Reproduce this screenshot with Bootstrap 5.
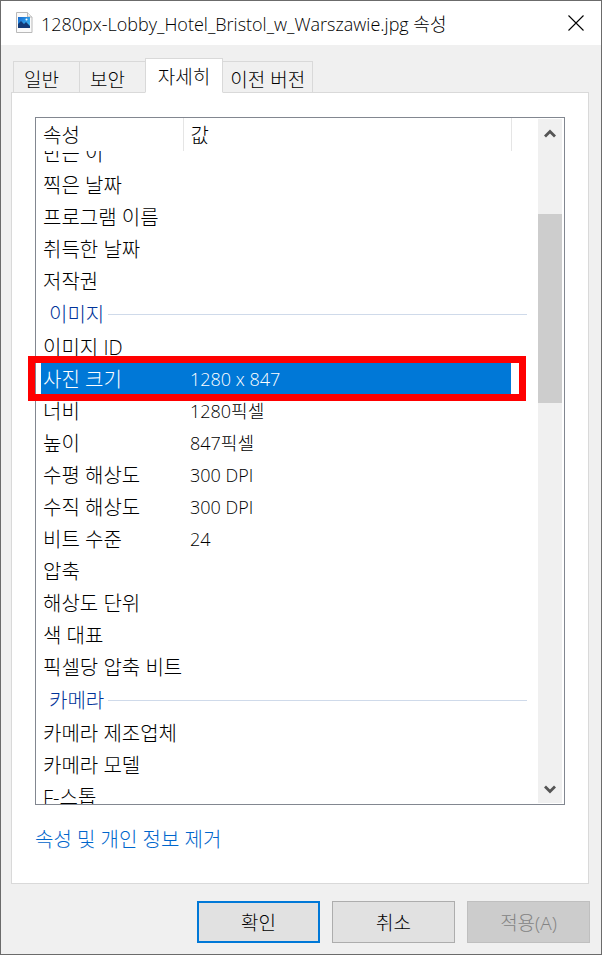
<!DOCTYPE html>
<html lang="ko">
<head>
<meta charset="utf-8">
<meta name="viewport" content="width=device-width, initial-scale=1">
<title>1280px-Lobby_Hotel_Bristol_w_Warszawie.jpg 속성</title>
<link href="https://cdn.jsdelivr.net/npm/bootstrap@5.3.0/dist/css/bootstrap.min.css" rel="stylesheet">
<style>
body{font-family:"Open Sans","Noto Sans CJK KR",sans-serif;font-size:20px;font-weight:300;line-height:32px;color:#000;background:#f0f0f0}
.win{border:1px solid #6b6b6b}
.titlebar{height:44px;padding:0 15px}
.titlebar h1{font-size:18px;font-weight:300;line-height:44px;padding-top:2px}
.close-btn{width:20px;height:20px}
.content{padding:13px 12px 0 10px}
.prop-tabs{border:0;margin:0 2px -1px;position:relative;z-index:1;font-size:19px}
.prop-tabs .nav-link{border:1px solid #d9d9d9;border-right-width:0;border-radius:0;background:#f0f0f0;color:#000;height:32px;padding:0 15px 0 10px;line-height:36px;margin:0}
.prop-tabs .nav-link.wide{padding:0 7px;border-left:0;border-right-width:1px}
.prop-tabs .nav-link.active{background:#fff;border:1px solid #d9d9d9;border-bottom-color:#fff;height:35px;padding:0 12px;color:#000}
.panel{border:1px solid #d9d9d9;padding:24px 23px 20px 23px}
.list-box{border:1px solid #828790}
.table-area{padding-left:5px}
.props{table-layout:fixed;line-height:28px}
.props td,.props th{padding:4px 0 0;height:32px;font-weight:300;white-space:nowrap}
.props td:first-child,.props th:first-child{padding-left:2px}
.props td:nth-child(2),.props th:nth-child(2){padding-left:7px}
.props td:nth-child(2){font-size:18px;line-height:30px;padding-top:2px}
.c-name{width:142px}.c-end{width:27px}
.props thead th{border-right:1px solid #e5e5e5;line-height:30px;padding-top:3px}
.props thead th:last-child{border:0}
.cut-top{height:17px;overflow:hidden}
.cut-bottom{height:20px;overflow:hidden}
.props tr.first td{height:17px;padding-top:0;padding-bottom:0}
.props tr.last td{height:24px}
.props .group td{height:34px;padding:4px 11px 0 8px;color:#039}
.group-line{height:1px;background:#cfdaea;margin-left:4px;margin-bottom:2px}
.picked{position:relative;color:#fff}
.picked td:nth-child(-n+2){background:#0078d7}
.frame{position:absolute;left:-13px;right:12px;top:-6px;bottom:-7px;border:7px solid #f00;pointer-events:none}
.scroll{width:24px;background:#f0f0f0;margin:1px 2px 1px 0}
.scroll button{height:28px}
.before-thumb{height:67px}
.thumb{height:189px;background:#cdcdcd}
.remove{color:#0066cc;line-height:32px;margin-top:19px}
.actions{padding:17px 11px 11px;gap:12px}
.dlg-btn{width:123px;height:42px;border:1px solid #adadad;border-radius:0;background:#e1e1e1;color:#000;font-size:19px;font-weight:300;line-height:30px;padding:2px 0 0}
.dlg-btn.main{border:2px solid #0078d7}
.dlg-btn:disabled{background:#ccc;border-color:#bfbfbf;color:#838383;opacity:1}
</style>
<script src="https://cdn.jsdelivr.net/npm/bootstrap@5.3.0/dist/js/bootstrap.bundle.min.js"></script>
</head>
<body>
<div class="win min-vh-100 d-flex flex-column">
<header class="titlebar bg-white d-flex align-items-center">
  <svg width="17" height="22" viewBox="0 0 17 22" aria-hidden="true">
    <defs><linearGradient id="sky" x2="1" y2="1"><stop stop-color="#1467cf"/><stop offset="1" stop-color="#48c8fa"/></linearGradient></defs>
    <path d="M.5.5h11l4.500 4.500v15.500H.5z" fill="#fafafa" stroke="#b9b9b9"/><path d="M11.5.5v4.500h4.500" fill="#eee" stroke="#b9b9b9"/>
    <path d="M2 5h12v11H2z" fill="url(#sky)"/><path d="M2 12l3-3 3 3 2-2 4 4v2H2z" fill="#123a78"/><circle cx="10.500" cy="7.500" r="1" fill="#fff"/>
  </svg>
  <h1 class="mb-0 ms-2 flex-grow-1 text-nowrap">1280px-Lobby_Hotel_Bristol_w_Warszawie.jpg 속성</h1>
  <button type="button" class="close-btn btn p-0 border-0 d-flex align-items-center justify-content-center" aria-label="닫기">
    <svg width="16" height="16" viewBox="0 0 16 16"><path d="M.5.5l15 15M15.500.5l-15 15" stroke="#000" stroke-width="1.100"/></svg>
  </button>
</header>
<main class="content d-flex flex-column flex-grow-1">
  <ul class="nav nav-tabs prop-tabs align-items-end flex-nowrap text-nowrap">
    <li class="nav-item"><a class="nav-link" href="#general">일반&nbsp;</a></li>
    <li class="nav-item"><a class="nav-link" href="#security">보안&nbsp;</a></li>
    <li class="nav-item"><a class="nav-link active" href="#details" aria-current="page">자세히</a></li>
    <li class="nav-item"><a class="nav-link wide" href="#versions">이전 버전</a></li>
  </ul>
  <section class="panel bg-white flex-grow-1" id="details">
    <div class="list-box d-flex">
      <div class="table-area flex-grow-1">
      <table class="props w-100">
        <colgroup><col class="c-name"><col><col class="c-end"></colgroup>
        <thead><tr><th scope="col">속성</th><th scope="col">값</th><th></th></tr></thead>
        <tbody>
        <tr class="first"><td><div class="cut-top d-flex align-items-end">만든 이</div></td><td></td><td></td></tr>
        <tr><td>찍은 날짜</td><td></td><td></td></tr>
        <tr><td>프로그램 이름</td><td></td><td></td></tr>
        <tr><td>취득한 날짜</td><td></td><td></td></tr>
        <tr><td>저작권</td><td></td><td></td></tr>
        <tr class="group"><td colspan="3"><div class="d-flex align-items-center">이미지<span class="group-line flex-grow-1"></span></div></td></tr>
        <tr><td>이미지 ID</td><td></td><td></td></tr>
        <tr class="picked" aria-selected="true"><td>사진 크기</td><td>1280 x 847</td><td><div class="frame"></div></td></tr>
        <tr><td>너비</td><td>1280픽셀</td><td></td></tr>
        <tr><td>높이</td><td>847픽셀</td><td></td></tr>
        <tr><td>수평 해상도</td><td>300 DPI</td><td></td></tr>
        <tr><td>수직 해상도</td><td>300 DPI</td><td></td></tr>
        <tr><td>비트 수준</td><td>24</td><td></td></tr>
        <tr><td>압축</td><td></td><td></td></tr>
        <tr><td>해상도 단위</td><td></td><td></td></tr>
        <tr><td>색 대표</td><td></td><td></td></tr>
        <tr><td>픽셀당 압축 비트</td><td></td><td></td></tr>
        <tr class="group"><td colspan="3"><div class="d-flex align-items-center">카메라<span class="group-line flex-grow-1"></span></div></td></tr>
        <tr><td>카메라 제조업체</td><td></td><td></td></tr>
        <tr><td>카메라 모델</td><td></td><td></td></tr>
        <tr class="last"><td><div class="cut-bottom">F-스톱</div></td><td></td><td></td></tr>
        </tbody>
      </table>
      </div>
      <div class="scroll d-flex flex-column flex-shrink-0">
        <button type="button" class="btn p-0 border-0 d-flex align-items-center justify-content-center" aria-label="위로"><svg width="12" height="9" viewBox="0 0 12 9"><path d="M1 7.500L6 2.500l5 5" fill="none" stroke="#555" stroke-width="2.800"/></svg></button>
        <div class="before-thumb"></div>
        <div class="thumb"></div>
        <button type="button" class="btn p-0 border-0 d-flex align-items-center justify-content-center mt-auto" aria-label="아래로"><svg width="12" height="9" viewBox="0 0 12 9"><path d="M1 1.500l5 5 5-5" fill="none" stroke="#555" stroke-width="2.800"/></svg></button>
      </div>
    </div>
    <a class="remove d-inline-block text-decoration-none" href="#remove">속성 및 개인 정보 제거</a>
  </section>
</main>
<footer class="actions d-flex justify-content-end">
  <button type="button" class="btn dlg-btn main">확인</button>
  <button type="button" class="btn dlg-btn">취소</button>
  <button type="button" class="btn dlg-btn" disabled>적용(A)</button>
</footer>
</div>
</body>
</html>
